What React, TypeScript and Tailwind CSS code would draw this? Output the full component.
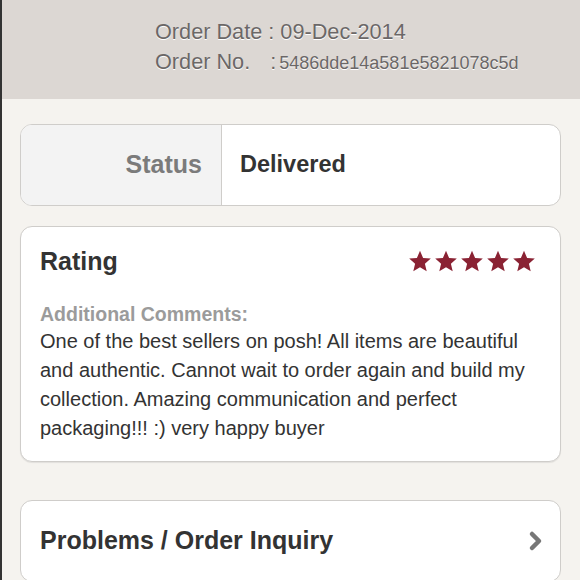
import React from "react";

const Star = () => (
  <svg width="24" height="23" viewBox="0 0 24 23" className="fill-[#8a2233]">
    <path d="M12 0.8l3.1 7.2 7.7 0.6-5.9 5.1 1.8 7.6L12 17.2l-6.7 4.1 1.8-7.6-5.9-5.1 7.7-0.6z" />
  </svg>
);

const OrderDetail = () => {
  return (
    <div
      className="w-[580px] h-[580px] overflow-hidden border-l-2 border-[#333] bg-[#f5f3ef]"
      style={{ fontFamily: '"Liberation Sans", Arial, sans-serif' }}
    >
      <header className="h-[99px] bg-[#dcd7d3] pl-[153px] pt-[17px] text-[#6b6767] [text-shadow:0_1px_0_#fff]">
        <p className="text-[21.7px] leading-[30px]">Order Date : 09-Dec-2014</p>
        <p className="text-[21.7px] leading-[30px]">
          Order No.
          <span className="ml-[20px]">:</span>
          <span className="ml-[3px] text-[18px]">5486dde14a581e5821078c5d</span>
        </p>
      </header>

      <div className="pl-[18px] pr-[19px]">
        <div className="mt-[25px] flex h-[82px] overflow-hidden rounded-[12px] border border-[#cfcdca] bg-white">
          <div className="flex w-[201px] items-center justify-end border-r border-[#cfcdca] bg-[#f3f3f3] pr-[19px]">
            <span className="text-[25px] font-bold text-[#7b7b7b]">Status</span>
          </div>
          <div className="flex items-center pl-[18px]">
            <span className="text-[23.5px] font-bold text-[#333]">Delivered</span>
          </div>
        </div>

        <div className="mt-[20px] rounded-[12px] border border-[#cfcdca] bg-white pl-[19px] pr-[24px] pt-[18px] pb-[18px] shadow-[0_1px_1px_rgba(0,0,0,0.08)]">
          <div className="flex items-center justify-between">
            <h2 className="text-[25px] leading-[32px] font-bold text-[#333]">Rating</h2>
            <div className="flex gap-[2px] pl-[4px]">
              <Star />
              <Star />
              <Star />
              <Star />
              <Star />
            </div>
          </div>
          <p className="mt-[24px] text-[19.5px] leading-[26px] font-bold text-[#9b9b9b]">
            Additional Comments:
          </p>
          <p className="text-[20px] leading-[29px] text-[#333]">
            One of the best sellers on posh! All items are beautiful
            <br />
            and authentic. Cannot wait to order again and build my
            <br />
            collection. Amazing communication and perfect
            <br />
            packaging!!! :) very happy buyer
          </p>
        </div>

        <div className="mt-[38px] flex h-[82px] items-center justify-between rounded-[12px] border border-[#cfcdca] bg-white pl-[19px] pr-[17px]">
          <span className="text-[25px] font-bold text-[#333]">Problems / Order Inquiry</span>
          <svg width="16" height="22" viewBox="0 0 16 22" fill="none">
            <path d="M5 4l7 7-7 7" stroke="#777" strokeWidth="4.5" strokeLinecap="round" strokeLinejoin="round" />
          </svg>
        </div>
      </div>
    </div>
  );
};

export default function App() {
  return <OrderDetail />;
}
